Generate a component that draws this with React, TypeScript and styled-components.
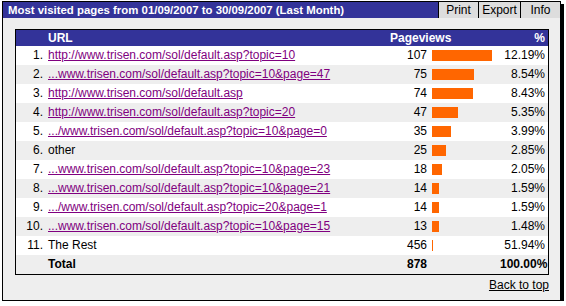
import styled, { createGlobalStyle } from "styled-components";

const GlobalStyle = createGlobalStyle`
  html, body {
    margin: 0;
    padding: 0;
    background: #ffffff;
  }
  body {
    font-family: "Liberation Sans", Arial, sans-serif;
    font-size: 12px;
    color: #000000;
  }
`;

const Page = styled.div`
  padding: 1px 0 0 2px;
`;

const Panel = styled.div`
  width: 557px;
  border: 1px solid #000000;
  box-shadow: 3px 3px 0 #000000;
  background: #eeeeee;
`;

const TitleBar = styled.div`
  display: flex;
  align-items: stretch;
  height: 16px;
  background: #333399;
`;

const Title = styled.div`
  flex: 1;
  padding-left: 5px;
  color: #ffffff;
  font-weight: bold;
  font-size: 11.4px;
  line-height: 16px;
  white-space: nowrap;
`;

const ToolButton = styled.div<{ $w: number }>`
  width: ${(p) => p.$w}px;
  box-sizing: border-box;
  border-left: 1px solid #000000;
  background: #dddddd;
  color: #000000;
  text-align: center;
  line-height: 16px;
`;

const Body = styled.div`
  padding: 11px 11px 8px 12px;
`;

const Table = styled.div`
  border: 1px solid #000000;
  background: #ffffff;
`;

const cols = "28px 346px 42px 68px 48px";

const HeaderRow = styled.div`
  display: grid;
  grid-template-columns: ${cols};
  height: 16px;
  line-height: 16px;
  background: #333399;
  color: #ffffff;
  font-weight: bold;
`;

const Row = styled.div<{ $alt?: boolean; $bold?: boolean }>`
  display: grid;
  grid-template-columns: ${cols};
  height: 19px;
  line-height: 19px;
  background: ${(p) => (p.$alt ? "#eeeeee" : "#ffffff")};
  font-weight: ${(p) => (p.$bold ? "bold" : "normal")};
  white-space: nowrap;
`;

const NumCell = styled.div`
  text-align: right;
  padding-right: 1px;
`;

const UrlCell = styled.div`
  padding-left: 4px;
  overflow: hidden;
`;

const CountCell = styled.div`
  text-align: right;
  padding-right: 5px;
`;

const SpanHead = styled.div`
  grid-column: 3 / 5;
  text-align: right;
  padding-right: 73px;
`;

const BarCell = styled.div`
  display: flex;
  align-items: center;
`;

const Bar = styled.div`
  height: 11px;
  background: #ff6600;
`;

const PctCell = styled.div`
  text-align: right;
  padding-right: 3px;
`;

const PageLink = styled.a`
  color: #800080;
  text-decoration: underline;
`;

const Footer = styled.div`
  text-align: right;
  padding: 3px 0 0 0;
  line-height: 14px;
`;

const TopLink = styled.a`
  color: #000000;
  text-decoration: underline;
`;

type Entry = {
  url: string;
  link: boolean;
  views: number;
  pct: string;
};

const entries: Entry[] = [
  { url: "http://www.trisen.com/sol/default.asp?topic=10", link: true, views: 107, pct: "12.19%" },
  { url: "...www.trisen.com/sol/default.asp?topic=10&page=47", link: true, views: 75, pct: "8.54%" },
  { url: "http://www.trisen.com/sol/default.asp", link: true, views: 74, pct: "8.43%" },
  { url: "http://www.trisen.com/sol/default.asp?topic=20", link: true, views: 47, pct: "5.35%" },
  { url: ".../www.trisen.com/sol/default.asp?topic=10&page=0", link: true, views: 35, pct: "3.99%" },
  { url: "other", link: false, views: 25, pct: "2.85%" },
  { url: "...www.trisen.com/sol/default.asp?topic=10&page=23", link: true, views: 18, pct: "2.05%" },
  { url: "...www.trisen.com/sol/default.asp?topic=10&page=21", link: true, views: 14, pct: "1.59%" },
  { url: ".../www.trisen.com/sol/default.asp?topic=20&page=1", link: true, views: 14, pct: "1.59%" },
  { url: "...www.trisen.com/sol/default.asp?topic=10&page=15", link: true, views: 13, pct: "1.48%" },
  { url: "The Rest", link: false, views: 456, pct: "51.94%" },
];

const maxViews = 107;

const App = () => {
  return (
    <Page>
      <GlobalStyle />
      <Panel>
        <TitleBar>
          <Title>Most visited pages from 01/09/2007 to 30/09/2007 (Last Month)</Title>
          <ToolButton $w={40}>Print</ToolButton>
          <ToolButton $w={42}>Export</ToolButton>
          <ToolButton $w={40}>Info</ToolButton>
        </TitleBar>
        <Body>
          <Table>
            <HeaderRow>
              <div />
              <UrlCell>URL</UrlCell>
              <SpanHead>Pageviews</SpanHead>
              <PctCell>%</PctCell>
            </HeaderRow>
            {entries.map((e, i) => {
              const rest = e.url === "The Rest";
              const w = rest ? 1 : Math.max(1, Math.floor((e.views / maxViews) * 60));
              return (
                <Row key={i} $alt={i % 2 === 1}>
                  <NumCell>{i + 1}.</NumCell>
                  <UrlCell>
                    {e.link ? <PageLink href="#">{e.url}</PageLink> : e.url}
                  </UrlCell>
                  <CountCell>{e.views}</CountCell>
                  <BarCell>
                    <Bar style={{ width: w }} />
                  </BarCell>
                  <PctCell>{e.pct}</PctCell>
                </Row>
              );
            })}
            <Row $alt $bold>
              <div />
              <UrlCell>Total</UrlCell>
              <CountCell>878</CountCell>
              <div />
              <PctCell>100.00%</PctCell>
            </Row>
          </Table>
          <Footer>
            <TopLink href="#">Back to top</TopLink>
          </Footer>
        </Body>
      </Panel>
    </Page>
  );
};

export default App;
